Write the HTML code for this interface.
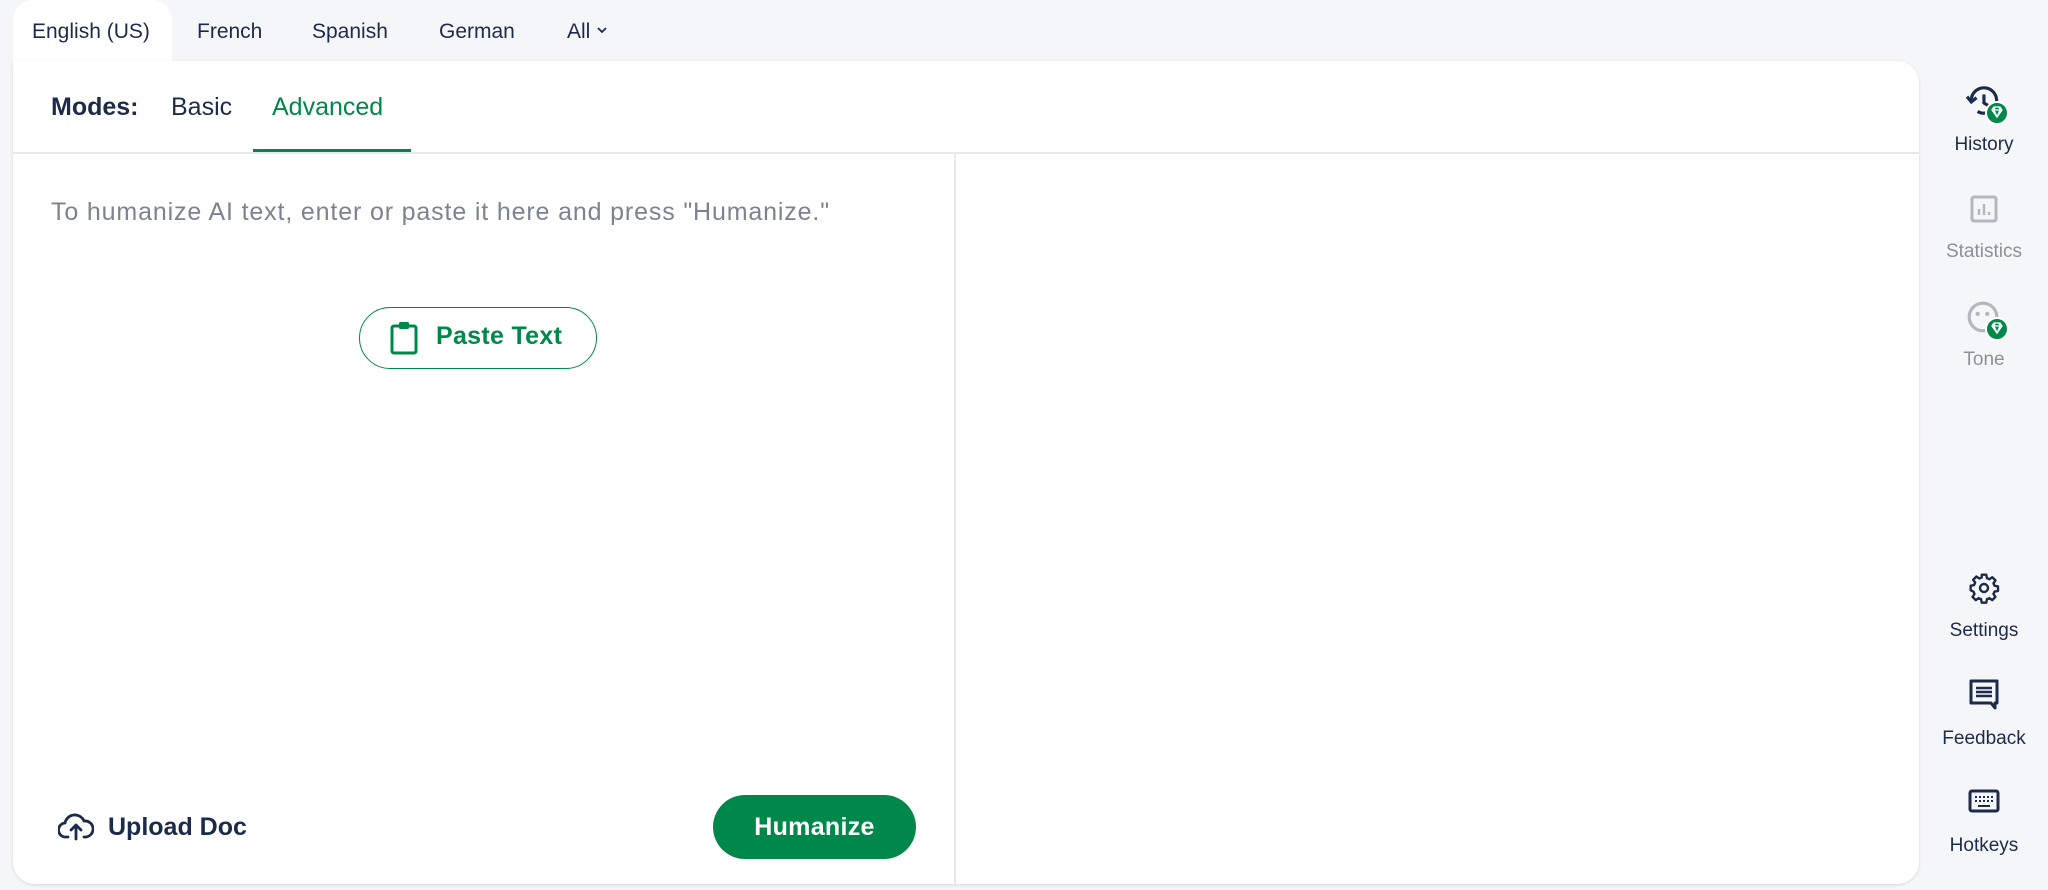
<!DOCTYPE html>
<html><head><meta charset="utf-8"><style>
*{box-sizing:border-box;margin:0;padding:0}
body{width:2048px;height:890px;background:#f5f6f8;font-family:"Liberation Sans",sans-serif;color:#1d2b4a;position:relative;overflow:hidden}
.abs{position:absolute}
.tab{position:absolute;top:20px;font-size:21px;color:#1d2b4a}
.card{position:absolute;left:13px;top:61px;width:1906px;height:823px;background:#fff;border-radius:0 22px 22px 22px;box-shadow:0 1px 3px rgba(0,0,0,.12)}
.side{position:absolute;left:1924px;width:120px;text-align:center;font-size:19px;color:#1d2b4a}
.gem{position:absolute;width:24px;height:24px;border-radius:50%;background:#00884a;border:2px solid #fff}
</style></head><body>
<div class="abs" style="left:13px;top:0;width:159px;height:70px;background:#fff;border-radius:20px 20px 0 0"></div>
<div class="tab" style="left:32px">English (US)</div>
<div class="tab" style="left:197px">French</div>
<div class="tab" style="left:312px">Spanish</div>
<div class="tab" style="left:439px">German</div>
<div class="tab" style="left:567px">All <svg width="12" height="10" viewBox="0 0 12 10" style="vertical-align:3px"><path d="M2 3l4 4 4-4" fill="none" stroke="#1d2b4a" stroke-width="1.8"/></svg></div>

<div class="card">
  <div class="abs" style="left:38px;top:32px;font-size:25px;font-weight:bold">Modes:</div>
  <div class="abs" style="left:158px;top:32px;font-size:25px">Basic</div>
  <div class="abs" style="left:259px;top:32px;font-size:25px;color:#00884a">Advanced</div>
  <div class="abs" style="left:240px;top:88px;width:158px;height:3px;background:#00884a"></div>
  <div class="abs" style="left:0;top:91px;width:1906px;height:2px;background:#e6e8eb"></div>
  <div class="abs" style="left:941px;top:93px;width:2px;height:730px;background:#e6e8eb"></div>
  <div class="abs" style="left:38px;top:137px;font-size:25px;color:#7c8390;letter-spacing:0.85px;white-space:nowrap">To humanize AI text, enter or paste it here and press "Humanize."</div>
  <div class="abs" style="left:346px;top:246px;width:238px;height:62px;border:1.6px solid #00884a;border-radius:31px"></div>
  <svg class="abs" style="left:375px;top:259px" width="32" height="36" viewBox="0 0 32 36"><rect x="4" y="6" width="24" height="27" rx="2" fill="none" stroke="#00884a" stroke-width="3"/><rect x="11" y="2" width="10" height="7" rx="1.5" fill="#00884a"/></svg>
  <div class="abs" style="left:423px;top:261px;font-size:25px;font-weight:bold;color:#00884a;letter-spacing:0.3px">Paste Text</div>
  <svg class="abs" style="left:45px;top:750px" width="36" height="30" viewBox="0 0 36 30"><path d="M10 26H8a7 7 0 0 1-1-14 10 10 0 0 1 19-2 8 8 0 0 1 2 16h-2" fill="none" stroke="#1d2b4a" stroke-width="2.8" stroke-linecap="round"/><path d="M18 28V14m-5 5 5-5 5 5" fill="none" stroke="#1d2b4a" stroke-width="2.8" stroke-linecap="round" stroke-linejoin="round"/></svg>
  <div class="abs" style="left:95px;top:752px;font-size:25px;font-weight:bold">Upload Doc</div>
  <div class="abs" style="left:700px;top:734px;width:203px;height:64px;border-radius:32px;background:#00884a;color:#fff;font-size:25px;font-weight:bold;text-align:center;line-height:64px;letter-spacing:0.3px">Humanize</div>
</div>

<!-- sidebar -->
<svg class="abs" style="left:1966px;top:84px" width="38" height="38" viewBox="0 0 36 36"><path d="M5 16a12 12 0 1 1 6 10" fill="none" stroke="#1d2b4a" stroke-width="3"/><path d="M1 12l4 5 5-4" fill="none" stroke="#1d2b4a" stroke-width="3"/><path d="M17 10v8l5 3" fill="none" stroke="#1d2b4a" stroke-width="3"/></svg>
<div class="gem" style="left:1985px;top:101px"><svg width="20" height="20" viewBox="0 0 20 20"><path d="M5 7l2-3h6l2 3-5 7z M5 7h10M8 4l-1 3 3 7 3-7-1-3" fill="none" stroke="#fff" stroke-width="1.3"/></svg></div>
<div class="side" style="top:134px">History</div>
<svg class="abs" style="left:1970px;top:195px" width="28" height="28" viewBox="0 0 28 28"><rect x="2" y="2" width="24" height="24" rx="2" fill="none" stroke="#b3b8bf" stroke-width="3"/><path d="M9 20v-6M14 20V9M19 20v-3" stroke="#b3b8bf" stroke-width="2.5"/></svg>
<div class="side" style="top:241px;color:#8b919a">Statistics</div>
<svg class="abs" style="left:1966px;top:300px" width="34" height="34" viewBox="0 0 32 32"><circle cx="16" cy="16" r="13" fill="none" stroke="#b3b8bf" stroke-width="3"/><circle cx="11" cy="13" r="2" fill="#b3b8bf"/><circle cx="20" cy="13" r="2" fill="#b3b8bf"/></svg>
<div class="gem" style="left:1985px;top:317px"><svg width="20" height="20" viewBox="0 0 20 20"><path d="M5 7l2-3h6l2 3-5 7z M5 7h10M8 4l-1 3 3 7 3-7-1-3" fill="none" stroke="#fff" stroke-width="1.3"/></svg></div>
<div class="side" style="top:349px;color:#8b919a">Tone</div>
<svg class="abs" style="left:1968px;top:572px" width="32" height="32" viewBox="0 0 24 24"><path d="M10.3 2h3.4l.5 2.6 1.8.8 2.2-1.5 2.4 2.4-1.5 2.2.8 1.8 2.6.5v3.4l-2.6.5-.8 1.8 1.5 2.2-2.4 2.4-2.2-1.5-1.8.8-.5 2.6h-3.4l-.5-2.6-1.8-.8-2.2 1.5-2.4-2.4 1.5-2.2-.8-1.8L2 13.7v-3.4l2.6-.5.8-1.8-1.5-2.2 2.4-2.4 2.2 1.5 1.8-.8z" fill="none" stroke="#1d2b4a" stroke-width="1.8" stroke-linejoin="round"/><circle cx="12" cy="12" r="3" fill="none" stroke="#1d2b4a" stroke-width="1.8"/></svg>
<div class="side" style="top:620px">Settings</div>
<svg class="abs" style="left:1968px;top:678px" width="32" height="32" viewBox="0 0 32 32"><path d="M3 3h26v22h-2v5l-4-5H3z" fill="none" stroke="#1d2b4a" stroke-width="3" stroke-linejoin="round"/><path d="M8 10h16M8 14h16M8 18h16" stroke="#1d2b4a" stroke-width="2.5"/></svg>
<div class="side" style="top:728px">Feedback</div>
<svg class="abs" style="left:1968px;top:789px" width="32" height="24" viewBox="0 0 32 24"><rect x="2" y="2" width="28" height="20" rx="2" fill="none" stroke="#1d2b4a" stroke-width="3"/><path d="M7 8h2M11 8h2M15 8h2M19 8h2M23 8h2M7 12h2M11 12h2M15 12h2M19 12h2M23 12h2M10 17h12" stroke="#1d2b4a" stroke-width="2"/></svg>
<div class="side" style="top:835px">Hotkeys</div>
</body></html>
